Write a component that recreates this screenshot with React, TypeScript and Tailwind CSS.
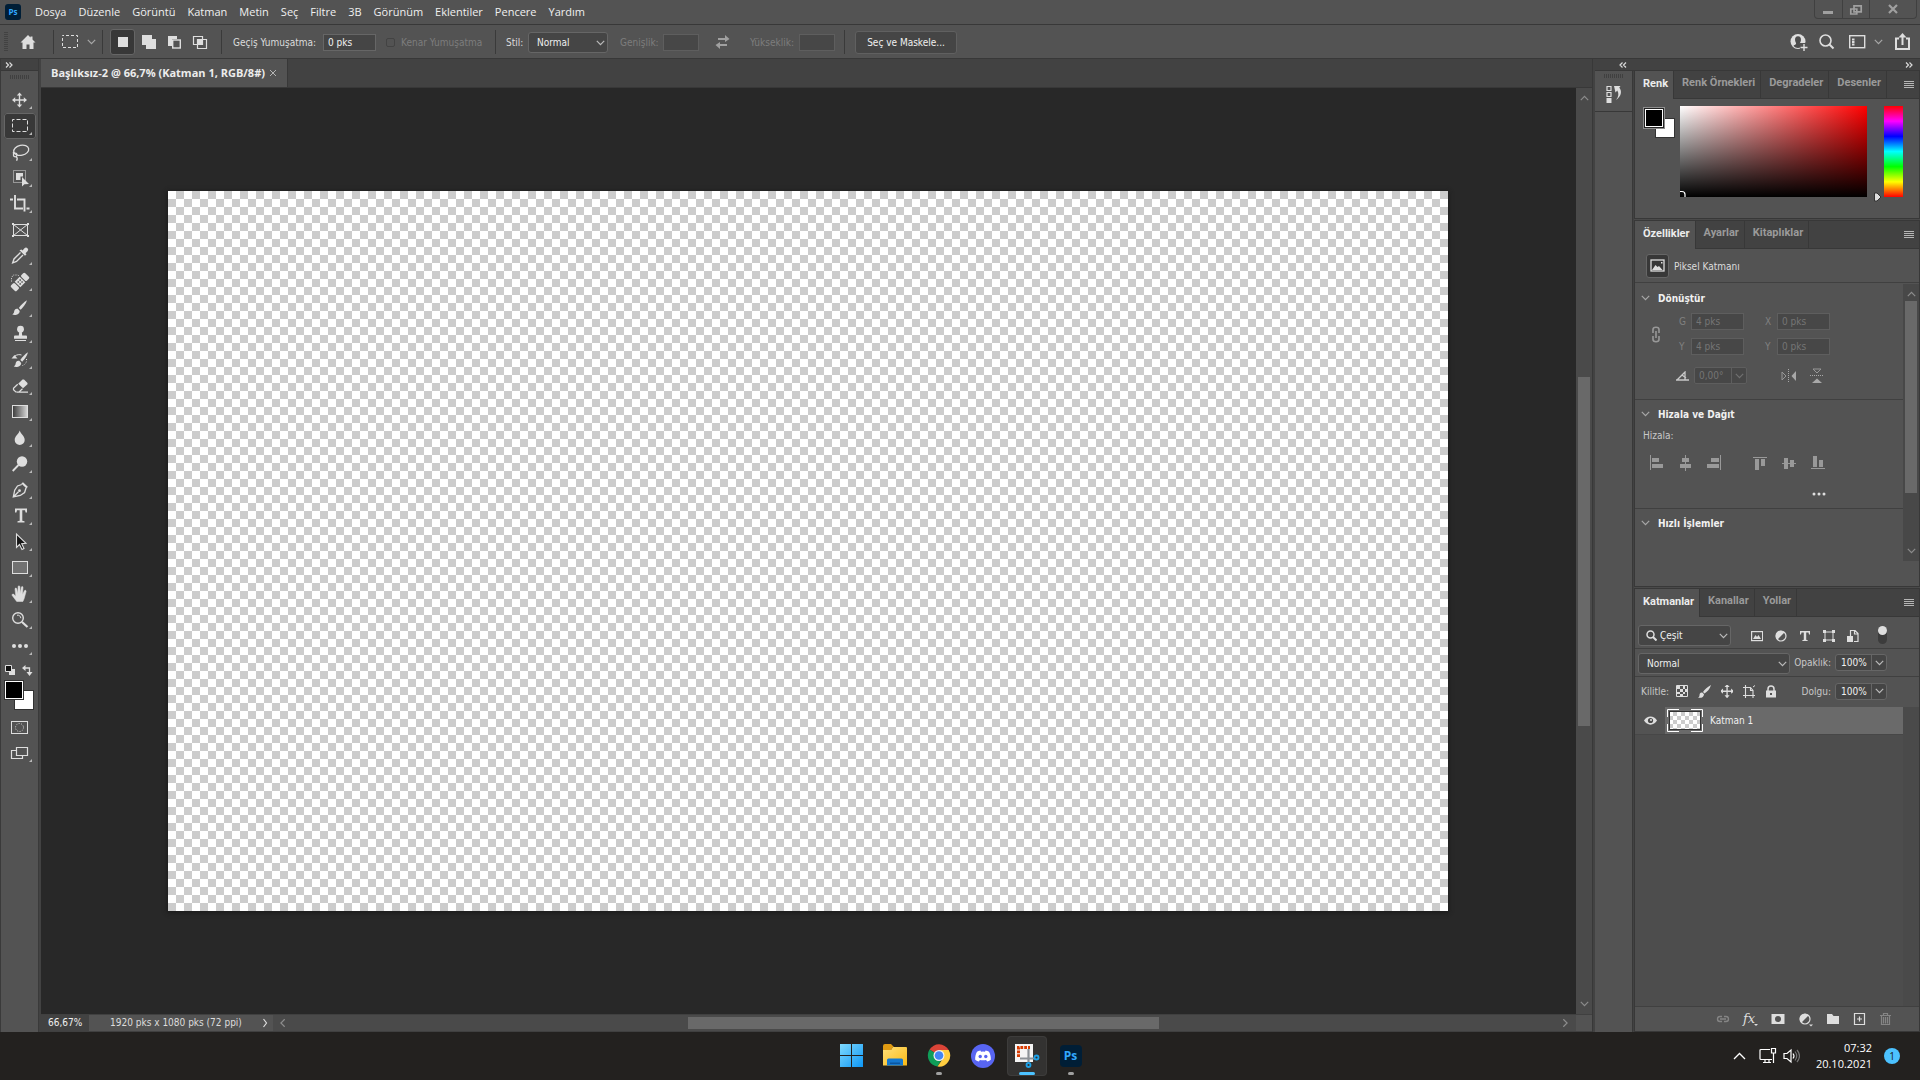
import React from "react";

const ui = "font-[family-name:'DejaVu_Sans_Condensed','DejaVu_Sans',sans-serif]";

function Chevron({ className = "" }: { className?: string }) {
  return (
    <svg className={className} width="9" height="6" viewBox="0 0 9 6" fill="none" stroke="currentColor" strokeWidth="1.2">
      <path d="M0.8 0.8 4.5 4.6 8.2 0.8" />
    </svg>
  );
}

function Svg({ w, h, children, className = "" }: { w: number; h: number; children: React.ReactNode; className?: string }) {
  return (
    <svg width={w} height={h} viewBox={`0 0 ${w} ${h}`} className={className} aria-hidden="true">
      {children}
    </svg>
  );
}

const C = "#dedede";

const movePath = "M15.5 5.5 12.800 8.600h2v3.600h-3.600v-2L8 13l3.200 2.800v-2h3.600v3.600h-2l2.700 3.100 2.700-3.100h-2v-3.600h3.600v2L23 13l-3.200-2.800v2h-3.600V8.600h2z";

const tools: { name: string; more: boolean; art: React.ReactNode }[] = [
  { name: "Taşı", more: true, art: <path d={movePath} fill={C} /> },
  { name: "Dikdörtgen Seçim", more: true, art: <rect x="8.5" y="6.5" width="15" height="12" fill="none" stroke={C} strokeDasharray="4 2" strokeDashoffset="2" /> },
  {
    name: "Kement",
    more: true,
    art: (
      <g fill="none" stroke={C} strokeWidth="1.3">
        <ellipse cx="17.2" cy="11.3" rx="7.6" ry="5" transform="rotate(-12 17.2 11.3)" />
        <circle cx="11.2" cy="16" r="1.8" />
        <path d="M12 17.5c1.6 1 1.4 2.6.6 4.2M9.6 15l-.2-2" />
      </g>
    ),
  },
  {
    name: "Nesne Seçimi",
    more: true,
    art: (
      <>
        <rect x="9.5" y="5.5" width="12" height="12" fill="none" stroke={C} strokeDasharray="1 1" />
        <path d="M12 8h7v3.500h-2.500V15H12z" fill={C} />
        <path d="M18 12v9.500l2.400-2.200 4.600-.3z" fill={C} />
      </>
    ),
  },
  { name: "Kırpma", more: true, art: <path d="M11 4v13.500h8M13 8.500h7.500v12M6 8.500h3M22.500 17.500h3" fill="none" stroke={C} strokeWidth="1.900" /> },
  {
    name: "Çerçeve",
    more: false,
    art: (
      <g fill="none" stroke={C}>
        <rect x="9.5" y="7.5" width="14" height="11" />
        <path d="M9.5 7.5l14 11M23.5 7.5l-14 11" />
        <path d="M8 7h2M23 7h2M8 19h2M23 19h2" strokeWidth="2" />
      </g>
    ),
  },
  {
    name: "Damlalık",
    more: true,
    art: (
      <>
        <path d="M17.5 6.5l1 1 2-2.200a2 2 0 0 1 3 3L21.500 10.300l1 1-1.500 1.500-5.500-5.500z" fill={C} />
        <path d="M16.500 9.500l-6.500 6.500-1.300 3.800 3.800-1.300L19 12" fill="none" stroke={C} strokeWidth="1.400" />
      </>
    ),
  },
  {
    name: "Nokta Düzeltme Fırçası",
    more: true,
    art: (
      <>
        <path d="M7.500 12.500V8.500l2-2.500h4l2 1" fill="none" stroke={C} strokeDasharray="1 1.300" />
        <g transform="rotate(-45 16 13)">
          <rect x="6" y="9" width="5.500" height="8" rx="1.500" fill={C} />
          <rect x="20.500" y="9" width="5.500" height="8" rx="1.500" fill={C} />
          <rect x="12.500" y="9" width="7" height="8" fill={C} />
          <path d="M14 11h1.500v1.500H14zM16.700 11h1.500v1.500h-1.500zM14 13.700h1.500v1.500H14zM16.700 13.700h1.500v1.500h-1.500z" fill="#535353" />
        </g>
      </>
    ),
  },
  {
    name: "Fırça",
    more: true,
    art: (
      <>
        <path d="M23 5.200c-3 1.500-6.200 5-8.200 7.700l1.900 1.800C19 12.500 22 9 23 5.200z" fill={C} />
        <path d="M13.800 13.800c-2.500-.5-3.600 1.200-3.700 3-.2 1.400-.8 2-1.900 2.600 2.200 1 7.300.8 7.500-3.500z" fill={C} />
      </>
    ),
  },
  {
    name: "Klonlama Damgası",
    more: true,
    art: (
      <>
        <circle cx="16.500" cy="8.200" r="3.400" fill={C} />
        <path d="M15.300 10h2.400l.5 4.500H22q1 0 1 1v2.200H10v-2.200q0-1 1-1h3.800zM11 19h11v1H11z" fill={C} />
      </>
    ),
  },
  {
    name: "Geçmiş Fırçası",
    more: true,
    art: (
      <>
        <path d="M24 5.200c-3 1.500-5.700 5-7.700 7.700l1.900 1.800C20.500 12.500 23 9 24 5.200z" fill={C} />
        <path d="M15.300 13.800c-2.500-.5-3.600 1.200-3.700 3-.2 1.400-.8 2-1.900 2.600 2.200 1 7.300.8 7.500-3.500z" fill={C} />
        <path d="M7.500 11.500l3-3.500 3 3.500z" fill={C} />
        <path d="M11 9c2-1.500 4.500-1.700 6.500-1" fill="none" stroke={C} />
        <path d="M22.500 12c.5 3-1 5.500-4 6.500" fill="none" stroke={C} strokeDasharray="1 1.500" />
      </>
    ),
  },
  {
    name: "Silgi",
    more: true,
    art: (
      <>
        <path d="M18.500 6.500h1.500l3.500 3.500v1.300l-4.500 4-4.800-4.600z" fill={C} />
        <path d="M13.700 11.200 9.500 15.300v1.400l2.300 2.300h3.200l3.500-3.200M13 19.200h11" fill="none" stroke={C} strokeWidth="1.200" />
      </>
    ),
  },
  {
    name: "Degrade",
    more: true,
    art: (
      <>
        <defs>
          <linearGradient id="toolGradient">
            <stop offset="0" stopColor="#3a3a3a" />
            <stop offset="1" stopColor="#d8d8d8" />
          </linearGradient>
        </defs>
        <rect x="8.5" y="6.5" width="15" height="12" fill="url(#toolGradient)" stroke={C} />
      </>
    ),
  },
  { name: "Bulanıklaştırma", more: true, art: <path d="M15.700 5.500c1.500 4 5 5.700 5 9.400a5 5 0 0 1-10 0c0-3.700 3.700-5.400 5-9.400z" fill={C} /> },
  {
    name: "Soldurma",
    more: true,
    art: (
      <>
        <circle cx="18" cy="10.500" r="5.200" fill={C} />
        <path d="M14.500 14 8.700 20" stroke={C} strokeWidth="1.800" />
      </>
    ),
  },
  {
    name: "Kalem",
    more: true,
    art: (
      <>
        <path d="M17.800 7.500 13.500 9 10.700 13.200 9.300 20l7-1.500 4.300-3 1.400-4.500M9.500 19.800l5-5" fill="none" stroke={C} strokeWidth="1.300" />
        <circle cx="15.500" cy="13.700" r="1.400" fill={C} />
        <path d="M19 5.200l4.800 4.600-1.300 1.800-5.200-5z" fill={C} />
      </>
    ),
  },
  { name: "Yatay Metin", more: true, art: <path d="M11 5.500h12V9.500h-1.400l-.6-2.200h-2.700v10.400l2.200.6v1.200h-7v-1.200l2.200-.6V7.300H13l-.6 2.200H11z" fill={C} /> },
  { name: "Yol Seçimi", more: true, art: <path d="M12.500 5v13.500l3-3 2.500 5 2-1-2.300-4.700 4.300-.5z" fill="#161616" stroke={C} strokeWidth="1.100" /> },
  { name: "Dikdörtgen", more: true, art: <rect x="8.5" y="6.5" width="15" height="12" fill="#717171" stroke={C} /> },
  {
    name: "El",
    more: true,
    art: (
      <path
        d="M12.700 20.500 8.200 14.500c-.7-1 .7-2 1.600-1.200l2 2-.8-7.200c-.1-1.300 1.500-1.500 1.800-.2l1 4.900.3-7c0-1.300 1.700-1.300 1.800 0l.3 6.800 1.100-6.300c.2-1.200 1.800-1 1.700.2l-.5 7 1.900-3.700c.6-1 2-.4 1.700.7l-2 7.200-1.200 2.800z"
        fill={C}
        stroke={C}
        strokeWidth=".5"
      />
    ),
  },
  {
    name: "Yakınlaştırma",
    more: true,
    art: (
      <>
        <circle cx="14" cy="11" r="5.300" fill="none" stroke={C} strokeWidth="1.400" />
        <path d="M13 8.200c2-.4 3.800 1 3.800 3" fill="none" stroke={C} />
        <path d="M18 15l5.500 5" stroke={C} strokeWidth="2.200" />
      </>
    ),
  },
  {
    name: "Araç çubuğunu düzenle",
    more: true,
    art: (
      <g fill={C}>
        <circle cx="10" cy="13" r="2" />
        <circle cx="16" cy="13" r="2" />
        <circle cx="22" cy="13" r="2" />
      </g>
    ),
  },
];

const menus = ["Dosya", "Düzenle", "Görüntü", "Katman", "Metin", "Seç", "Filtre", "3B", "Görünüm", "Eklentiler", "Pencere", "Yardım"];

function Sep() {
  return <div className="h-6 w-px shrink-0 bg-[#3a3a3a]" />;
}

function TitleBar() {
  return (
    <header className="flex h-[25px] shrink-0 items-start border-b border-[#383838] bg-[#535353]">
      <div className="ml-[5px] mt-1 flex h-4 w-4 items-center justify-center rounded-[3px] bg-[#001e36] font-['Open_Sans',sans-serif] text-[8px] font-bold text-[#31a8ff]">Ps</div>
      <nav className="ml-2 flex h-6 items-center font-['Open_Sans',sans-serif] text-[11px] text-[#f0f0f0]">
        {menus.map((m) => (
          <button key={m} className="px-[6px]">
            {m}
          </button>
        ))}
      </nav>
      <div className="ml-auto mr-[3px] flex h-[19px] rounded-b border border-t-0 border-[#404040] text-[#a0a0a0]">
        <button aria-label="Küçült" className="w-[28px] border-r border-[#404040]">
          <Svg w={26} h={18}><path d="M8 11h10v3H8z" fill="#a0a0a0" /></Svg>
        </button>
        <button aria-label="Geri yükle" className="w-[27px] border-r border-[#404040]">
          <Svg w={26} h={18}><path d="M11 5.800h7.200v6H11zM7.800 9h6v5h-6z" fill="#535353" stroke="#a0a0a0" strokeWidth="1.700" /></Svg>
        </button>
        <button aria-label="Kapat" className="flex w-[46px] justify-center">
          <Svg w={26} h={18}><path d="M9 5l8 8M17 5l-8 8" stroke="#a0a0a0" strokeWidth="2.200" /></Svg>
        </button>
      </div>
    </header>
  );
}

function OptionsBar() {
  return (
    <div className={`flex h-[34px] shrink-0 items-center border-b border-[#383838] bg-[#535353] pt-px text-[10px] text-[#dcdcdc] ${ui}`}>
      <div className="ml-1 h-5 w-1 bg-[repeating-linear-gradient(#424242_0_1px,transparent_1px_2px)]" />
      <button aria-label="Giriş" className="ml-3">
        <Svg w={16} h={16}><path d="M8 1 0.500 8.500h2V15h4v-4.500h3V15h4V8.500h2L12.500 5.500V2.500h-2v1z" fill={C} /></Svg>
      </button>
      <div className="ml-[17px]"><Sep /></div>
      <button aria-label="Araç ön ayarı" className="ml-2 flex items-center gap-2 text-[#a8a8a8]">
        <Svg w={17} h={14}><rect x="0.500" y="0.500" width="15" height="12" fill="none" stroke={C} strokeDasharray="3 2" strokeDashoffset="1.500" /></Svg>
        <Chevron />
      </button>
      <div className="ml-[6px]"><Sep /></div>
      <button aria-label="Yeni seçim" className="ml-[7px] flex h-[26px] w-[25px] items-center justify-center rounded-[3px] border border-[#666] bg-[#383838]">
        <span className="h-[10px] w-[10px] bg-[#dedede]" />
      </button>
      <button aria-label="Seçime ekle" className="ml-[6px]">
        <Svg w={16} h={16}><path d="M1 1h10v4h4v10H5v-4H1z" fill={C} /></Svg>
      </button>
      <button aria-label="Seçimden çıkar" className="ml-[11px]">
        <Svg w={14} h={16}><path d="M0 2h9v3H4v7H0z" fill={C} /><rect x="4.700" y="6" width="7.600" height="8" fill="none" stroke={C} strokeWidth="1.400" /></Svg>
      </button>
      <button aria-label="Seçimle kesiştir" className="ml-[10px]">
        <Svg w={16} h={16}><path d="M1.500 2.500h9v8h-9zM5.500 5.500h9v9h-9z" fill="none" stroke={C} strokeWidth="1.200" /><path d="M6 6h4.500v4.500H6z" fill={C} /></Svg>
      </button>
      <div className="ml-[13px]"><Sep /></div>
      <label htmlFor="feather" className="ml-[11px] w-[83px] whitespace-nowrap">Geçiş Yumuşatma:</label>
      <input id="feather" defaultValue="0 pks" className="ml-[7px] h-[17px] w-[53px] border border-[#666] bg-[#454545] px-1 text-[#f0f0f0]" />
      <input id="antialias" type="checkbox" disabled className="ml-[10px] h-[9px] w-[9px] appearance-none rounded-[2px] border border-[#434343]" />
      <label htmlFor="antialias" className="ml-[6px] w-[82px] whitespace-nowrap text-[#7d7d7d]">Kenar Yumuşatma</label>
      <div className="ml-[12px]"><Sep /></div>
      <label htmlFor="style" className="ml-[10px] w-[16px] whitespace-nowrap">Stil:</label>
      <div className="relative ml-[6px]">
        <select id="style" className="block h-[21px] w-[80px] appearance-none rounded-[3px] border border-[#666] bg-[#454545] pl-2 text-[#f0f0f0]">
          <option>Normal</option>
        </select>
        <Chevron className="pointer-events-none absolute right-[3px] top-2 text-[#bbb]" />
      </div>
      <label htmlFor="width" className="ml-3 w-[38px] whitespace-nowrap text-[#7d7d7d]">Genişlik:</label>
      <input id="width" disabled className="ml-[5px] h-[17px] w-9 border border-[#5e5e5e] bg-[#474747]" />
      <button aria-label="Değiştir" className="ml-4">
        <Svg w={15} h={14}><path d="M3 3h7V0l4.500 4L10 7V5H3zM12 9v2H5v3L0.500 10 5 7v2z" fill="#a0a0a0" /></Svg>
      </button>
      <label htmlFor="height" className="ml-5 w-[44px] whitespace-nowrap text-[#7d7d7d]">Yükseklik:</label>
      <input id="height" disabled className="ml-[5px] h-[17px] w-9 border border-[#5e5e5e] bg-[#474747]" />
      <div className="ml-[9px]"><Sep /></div>
      <button className="ml-[10px] h-[23px] w-[102px] rounded-[3px] border border-[#606060] bg-[#454545] text-[#f0f0f0]">Seç ve Maskele...</button>
      <div className="ml-auto mr-2 flex items-center text-[#a8a8a8]">
        <button aria-label="Hesap">
          <Svg w={18} h={18}>
            <circle cx="8" cy="8.500" r="7.500" fill={C} />
            <path d="M8 3.200c-2.300 0-3.300 1.800-2.900 4.200.2 1.500 1 2.400 1 3.300C5.500 12 4 11.800 3.500 13a6.200 6.200 0 0 0 9 0c-.5-1.200-2-1-2.600-2.300 0-.9.800-1.800 1-3.300.4-2.400-.6-4.200-2.900-4.200z" fill="#4c4c4c" />
            <path d="M10 10h8v8h-8z" fill="#535353" />
            <path d="M14 11v7M10.500 14.500h7" stroke={C} strokeWidth="1.400" />
          </Svg>
        </button>
        <button aria-label="Ara" className="ml-[11px]">
          <Svg w={16} h={16}><circle cx="6.500" cy="6.500" r="5.500" fill="none" stroke={C} strokeWidth="1.600" /><path d="M10.500 10.500l4 4" stroke={C} strokeWidth="2" /></Svg>
        </button>
        <button aria-label="Çalışma alanı" className="ml-[14px] flex items-center gap-2">
          <Svg w={17} h={14}><rect x="0.700" y="0.700" width="15" height="12" fill="none" stroke={C} strokeWidth="1.400" /><path d="M3 3.500h2.500v2H3zM3 6h2.500v2H3zM3 8.500h2.500v2H3z" fill={C} /></Svg>
          <Chevron />
        </button>
        <button aria-label="Paylaş" className="ml-[11px]">
          <Svg w={18} h={18}><path d="M5 5.500H2v10.500h13V5.500h-3M8.500 12V3" fill="none" stroke={C} strokeWidth="2" /><path d="M4.500 4.500 8.500 0l4 4.500z" fill={C} /></Svg>
        </button>
      </div>
    </div>
  );
}

function DoubleArrow({ left = false }: { left?: boolean }) {
  return (
    <Svg w={8} h={6}>
      <path d={left ? "M3.500.500 1 3l2.500 2.500M7 .500 4.500 3 7 5.500" : "M1 .500 3.500 3 1 5.500M4.500.500 7 3 4.500 5.500"} fill="none" stroke="#dadada" strokeWidth="1.200" />
    </Svg>
  );
}

const grip = "bg-[repeating-linear-gradient(90deg,#404040_0_1px,transparent_1px_2px)]";

function Toolbar() {
  return (
    <aside className="flex w-[39px] shrink-0 flex-col border-x border-[#3a3a3a] bg-[#535353]">
      <div className="flex h-3 items-center border-b border-[#383838] bg-[#424242] pl-1">
        <button aria-label="Genişlet"><DoubleArrow /></button>
      </div>
      <div className={`mx-auto mt-1 h-1 w-5 ${grip}`} />
      <div className="ml-[3px] mt-2 flex flex-col">
        {tools.map((t, i) => (
          <button key={t.name} aria-label={t.name} className={`h-[26px] w-8 rounded-[3px] ${i === 1 ? "bg-[#383838] outline outline-1 -outline-offset-1 outline-[#666]" : ""}`}>
            <Svg w={32} h={26}>
              {t.art}
              {t.more && <path d="M28 19v3h-3z" fill="#b8b8b8" />}
            </Svg>
          </button>
        ))}
      </div>
      <div className="ml-1 mt-[6px] flex justify-between pr-[5px]">
        <button aria-label="Varsayılan renkler">
          <Svg w={11} h={11}><path d="M4 4h6v6H4z" fill={C} /><path d="M.500.500h6v6h-6z" fill="#111" stroke={C} /></Svg>
        </button>
        <button aria-label="Renkleri değiştir">
          <Svg w={11} h={11}><path d="M3 3h4.500v4" fill="none" stroke={C} strokeWidth="1.300" /><path d="M0 3l3.500-3v6zM7.500 11l-3-4h6z" fill={C} /></Svg>
        </button>
      </div>
      <div className="ml-[3px] mt-1 grid h-[30px] w-[30px] grid-cols-1 grid-rows-1">
        <button aria-label="Arka plan rengi" className="col-start-1 row-start-1 h-5 w-5 self-end justify-self-end border border-[#333] bg-white" />
        <button aria-label="Ön plan rengi" className="z-10 col-start-1 row-start-1 h-5 w-5 border border-[#333] bg-white p-px"><span className="block h-full bg-black" /></button>
      </div>
      <button aria-label="Hızlı maske" className="ml-[3px] mt-1 h-[26px] w-8">
        <Svg w={32} h={26}><rect x="7.500" y="7.500" width="16" height="12" fill="none" stroke={C} /><circle cx="15.500" cy="13.500" r="4" fill="none" stroke={C} strokeDasharray="1 1.500" /></Svg>
      </button>
      <button aria-label="Ekran modu" className="ml-[3px] h-[26px] w-8">
        <Svg w={32} h={26}><path d="M7.500 10.500h11v8h-11z" fill="none" stroke={C} strokeWidth="1.200" /><path d="M12.500 7.500h11v8h-11z" fill="#535353" stroke={C} strokeWidth="1.200" /><path d="M28 19v3h-3z" fill="#b8b8b8" /></Svg>
      </button>
    </aside>
  );
}

function DocumentArea() {
  return (
    <main className="ml-[2px] flex min-w-0 grow flex-col border-r border-[#383838] bg-[#424242]">
      <div className="flex h-[29px] shrink-0 border-b border-[#383838]">
        <div className="flex items-center border-r border-[#383838] bg-[#535353] pl-[10px] pr-[10px] font-['Open_Sans',sans-serif] text-[11px] font-bold text-[#ececec]">
          <span className="whitespace-nowrap">Başlıksız-2 @ 66,7% (Katman 1, RGB/8#)</span>
          <button aria-label="Belgeyi kapat" className="ml-1">
            <Svg w={8} h={8}><path d="M1 1l6 6M7 1 1 7" stroke="#b5b5b5" /></Svg>
          </button>
        </div>
      </div>
      <div className="flex min-h-0 grow">
        <div className="flex min-w-0 grow items-center justify-center overflow-hidden bg-[#282828] pr-px">
          <div className="aspect-video w-[1280px] shrink-0 bg-[conic-gradient(#ccc_25%,#fff_0_50%,#ccc_0_75%,#fff_0)] bg-[length:16px_16px] shadow-[0_1px_4px_1px_#1c1c1c]" />
        </div>
        <div className="flex w-4 shrink-0 flex-col items-center bg-[#4a4a4a] text-[#8c8c8c]">
          <Chevron className="mt-[7px] rotate-180" />
          <div className="mt-[276px] h-[349px] w-3 bg-[#696969]" />
          <Chevron className="mb-[7px] mt-auto" />
        </div>
      </div>
      <div className={`flex h-[18px] shrink-0 items-stretch border-b border-t border-[#404040] text-[10px] leading-4 text-[#dcdcdc] ${ui}`}>
        <input aria-label="Yakınlaştırma" defaultValue="66,67%" className="w-12 bg-[#424242] pl-[7px] text-[#f0f0f0]" />
        <div className="flex w-[184px] items-center justify-between bg-[#535353] pl-[21px] pr-1">
          <span className="whitespace-nowrap">1920 pks x 1080 pks (72 ppi)</span>
          <button aria-label="Durum bilgisi"><Svg w={7} h={10}><path d="M1.500 1l3 4-3 4" fill="none" stroke={C} strokeWidth="1.200" /></Svg></button>
        </div>
        <div className="flex grow items-center bg-[#4a4a4a] text-[#8c8c8c]">
          <Chevron className="ml-[5px] rotate-90" />
          <div className="ml-[401px] h-3 w-[471px] bg-[#696969]" />
          <Chevron className="ml-auto mr-[6px] -rotate-90" />
        </div>
        <div className="w-4 bg-[#535353]" />
      </div>
    </main>
  );
}

function Tabs({ names }: { names: string[] }) {
  return (
    <div className="flex h-7 shrink-0 bg-[#424242] font-['Roboto',sans-serif] text-[11px] font-bold">
      {names.map((n, i) => (
        <button key={n} className={`whitespace-nowrap border-r border-[#383838] pb-[2px] pl-2 pr-[5px] ${i === 0 ? "bg-[#535353] text-[#ececec]" : "border-b text-[#9a9a9a]"}`}>
          {n}
        </button>
      ))}
      <div className="flex grow items-center justify-end border-b border-[#383838] pr-[5px]">
        <button aria-label="Panel menüsü">
          <Svg w={10} h={8}><path d="M0 .500h10M0 2.500h10M0 4.500h10M0 6.500h10" stroke="#b5b5b5" /></Svg>
        </button>
      </div>
    </div>
  );
}

function ColorPanel() {
  return (
    <section className="h-[148px] shrink-0 border border-t-0 border-[#383838] bg-[#535353]">
      <Tabs names={["Renk", "Renk Örnekleri", "Degradeler", "Desenler"]} />
      <div className="flex px-2 pt-[7px]">
        <div className="grid h-8 w-8 shrink-0 grid-cols-1 grid-rows-1">
          <button aria-label="Arka plan" className="col-start-1 row-start-1 h-5 w-5 self-end justify-self-end border border-[#333] bg-white" />
          <button aria-label="Ön plan" className="z-10 col-start-1 row-start-1 mt-[1px] h-[22px] w-[22px] border border-[#8d8d8d] bg-[#222] p-px"><span className="block h-full border border-white bg-black" /></button>
        </div>
        <div className="ml-[5px] h-[91px] grow bg-[linear-gradient(to_top,#000,transparent),linear-gradient(to_right,#fff,#f00)]">
          <div className="flex h-full items-end"><Svg w={7} h={7}><path d="M0 1.500h2c2 0 3 1.500 3 3V7" fill="none" stroke="#fff" strokeWidth="1.200" /></Svg></div>
        </div>
        <div className="mb-[-5px] ml-[6px] flex items-end">
          <Svg w={10} h={10}><path d="M1.500 1h2.500l4 4-4 4H1.500z" fill={C} stroke="#333" /></Svg>
        </div>
        <div className="ml-px mr-2 h-[91px] w-[19px] bg-[linear-gradient(#f00,#f0f,#00f,#0ff,#0f0,#ff0,#f00)]" />
      </div>
    </section>
  );
}

function Field({ id, label, value }: { id: string; label: string; value: string }) {
  return (
    <div className="flex items-center">
      <label htmlFor={id} className="w-3 text-[#808080]">{label}</label>
      <input id={id} disabled defaultValue={value} className="h-[17px] w-[53px] border border-[#5e5e5e] bg-[#474747] px-1 text-[#757575]" />
    </div>
  );
}

function Heading({ children }: { children: string }) {
  return (
    <button className="ml-[6px] flex h-4 items-center gap-2 font-bold text-[#f0f0f0]">
      <Chevron className="text-[#a8a8a8]" />
      {children}
    </button>
  );
}

const alignIcons = [
  { n: "Sola", d: "M0 0h1v15H0zM2 3h7v4H2zM2 9h11v4H2z" },
  { n: "Yatay ortala", d: "M6 0h1v16H6zM3 3h7v4H3zM1 9h11v4H1z" },
  { n: "Sağa", d: "M13 0h1v15h-1zM4 3h8v4H4zM0 9h12v4H0z" },
  { n: "Üste", d: "M0 2h14v1H0zM2 4h4v11H2zM8 4h4v7H8z" },
  { n: "Dikey ortala", d: "M0 8h14v1H0zM2 3h4v11H2zM8 5h4v7H8z" },
  { n: "Alta", d: "M0 13h14v1H0zM2 1h4v11H2zM8 5h4v7H8z" },
];

function PropertiesPanel() {
  return (
    <section className={`mt-px flex h-[367px] shrink-0 flex-col border border-[#383838] bg-[#535353] text-[10px] ${ui}`}>
      <Tabs names={["Özellikler", "Ayarlar", "Kitaplıklar"]} />
      <div className="flex h-[34px] shrink-0 items-center border-b border-[#404040] pl-[11px] text-[#dcdcdc]">
        <div className="flex h-6 w-[23px] items-center justify-center rounded-[3px] border border-[#666] bg-[#383838]">
          <Svg w={15} h={13}><rect x="1" y="1" width="13" height="11" fill="none" stroke={C} strokeWidth="1.300" /><path d="M2 11l3.500-5 2 2 1.500-1 3.500 4zM11 3h1.500v1.500H11z" fill={C} /></Svg>
        </div>
        <span className="ml-[5px] mt-[2px]">Piksel Katmanı</span>
      </div>
      <div className="mt-px flex">
        <div className="min-w-0 grow">
          <div className="h-[116px] border-b border-[#404040] pt-[6px]">
            <Heading>Dönüştür</Heading>
            <div className="ml-[16px] mt-[7px] flex">
              <div className="flex w-[28px] items-center">
                <Svg w={10} h={17}><path d="M2 7V3.500C2 .500 8 .500 8 3.500V7M2 10v3.500c0 3 6 3 6 0V10M5 5v7" fill="none" stroke="#989898" strokeWidth="1.600" /></Svg>
              </div>
              <div className="grid grid-cols-[65px_65px] gap-x-[21px] gap-y-2">
                <Field id="pw" label="G" value="4 pks" />
                <Field id="px" label="X" value="0 pks" />
                <Field id="ph" label="Y" value="4 pks" />
                <Field id="py" label="Y" value="0 pks" />
              </div>
            </div>
            <div className="ml-[41px] mt-3 flex items-center">
              <Svg w={13} h={10}><path d="M0 9h13M1 9 9 1v8M6 4l4 3" fill="none" stroke="#c8c8c8" strokeWidth="1.300" /></Svg>
              <div className="ml-[5px] flex h-[17px] rounded-[2px] border border-[#5e5e5e] bg-[#474747]">
                <input aria-label="Açı" disabled defaultValue="0,00°" className="w-[37px] border-r border-[#5e5e5e] pl-1 text-[#757575]" />
                <button aria-label="Açı seçenekleri" className="flex w-[14px] items-center justify-center text-[#707070]"><Chevron /></button>
              </div>
              <button aria-label="Yatay çevir" className="ml-[34px]"><Svg w={16} h={14}><path d="M1 3l4 4-4 4z" fill="none" stroke="#989898" /><path d="M15 2v10L10.500 7z" fill="#a8a8a8" /><path d="M7.500 0v14" stroke="#a8a8a8" strokeDasharray="1 1" /></Svg></button>
              <button aria-label="Dikey çevir" className="ml-[13px]"><Svg w={14} h={16}><path d="M3 1h8L7 5z" fill="none" stroke="#989898" /><path d="M2 15h10L7 10.500z" fill="#a8a8a8" /><path d="M0 7.500h14" stroke="#a8a8a8" strokeDasharray="1 1" /></Svg></button>
            </div>
          </div>
          <div className="h-[109px] border-b border-[#404040] pt-[6px]">
            <Heading>Hizala ve Dağıt</Heading>
            <div className="ml-2 mt-[6px] h-[15px] text-[#c8c8c8]">Hizala:</div>
            <div className="ml-[15px] mt-[12px] grid w-[190px] grid-cols-[29px_28px_46px_29px_29px_29px]">
              {alignIcons.map((a) => (
                <button key={a.n} aria-label={a.n}><Svg w={14} h={16}><path d={a.d} fill="#999" /></Svg></button>
              ))}
            </div>
            <button aria-label="Diğer seçenekler" className="ml-[177px] mt-[21px] block">
              <Svg w={14} h={4}><circle cx="2" cy="2" r="1.500" fill={C} /><circle cx="7" cy="2" r="1.500" fill={C} /><circle cx="12" cy="2" r="1.500" fill={C} /></Svg>
            </button>
          </div>
          <div className="pt-[6px]"><Heading>Hızlı İşlemler</Heading></div>
        </div>
        <div className="flex h-[277px] w-4 shrink-0 flex-col items-center bg-[#484848] text-[#8c8c8c]">
          <Chevron className="mt-[7px] rotate-180" />
          <div className="mt-1 h-[192px] w-3 bg-[#696969]" />
          <Chevron className="mb-[7px] mt-auto" />
        </div>
      </div>
    </section>
  );
}

function PercentField({ id, label }: { id: string; label: string }) {
  return (
    <div className="ml-auto flex items-center">
      <label htmlFor={id} className="mr-1 text-[#c8c8c8]">{label}</label>
      <div className="flex h-[17px] rounded-[3px] border border-[#666] bg-[#454545]">
        <input id={id} defaultValue="100%" className="w-9 border-r border-[#666] pl-[5px] text-[#f0f0f0]" />
        <button aria-label={`${label} kaydırıcısı`} className="flex w-[14px] items-center justify-center text-[#bbb]"><Chevron /></button>
      </div>
    </div>
  );
}

function Half() {
  return (
    <>
      <circle cx="6" cy="6" r="5" fill="none" stroke={C} strokeWidth="1.200" />
      <path d="M9.700 2.300A5.200 5.200 0 0 0 2.300 9.700z" fill={C} />
    </>
  );
}

function LayersPanel() {
  return (
    <section className={`mt-px flex min-h-0 grow flex-col border border-[#383838] bg-[#535353] text-[10px] ${ui}`}>
      <Tabs names={["Katmanlar", "Kanallar", "Yollar"]} />
      <div className="flex h-8 shrink-0 items-center border-b border-[#404040] pl-[3px] pt-[6px]">
        <div className="relative">
          <select aria-label="Katman filtresi" className="block h-[21px] w-[93px] appearance-none rounded-[3px] border border-[#666] bg-[#454545] pl-[21px] text-[#f0f0f0]">
            <option>Çeşit</option>
          </select>
          <Svg w={11} h={11} className="pointer-events-none absolute left-2 top-[5px]"><circle cx="4.500" cy="4.500" r="3.500" fill="none" stroke={C} strokeWidth="1.500" /><path d="M7 7l3.500 3.500" stroke={C} strokeWidth="2" /></Svg>
          <Chevron className="pointer-events-none absolute right-[3px] top-2 text-[#bbb]" />
        </div>
        <div className="ml-5 flex items-center gap-3">
          <button aria-label="Piksel katmanları"><Svg w={12} h={12}><rect x=".600" y="1.600" width="11" height="9" fill="none" stroke={C} strokeWidth="1.200" /><path d="M2 9l2.500-4L6 7l1.500-2L10 9z" fill={C} /></Svg></button>
          <button aria-label="Ayarlama katmanları"><Svg w={12} h={12}><Half /></Svg></button>
          <button aria-label="Metin katmanları"><Svg w={12} h={12}><path d="M1 1h10v3.500h-1L9.500 2.500H7.200v7.300l1.500.4V11H3.300v-.8l1.500-.4V2.500H2.500L2 4.500H1z" fill={C} /></Svg></button>
          <button aria-label="Şekil katmanları"><Svg w={12} h={12}><rect x="2" y="2" width="8" height="8" fill="none" stroke={C} /><path d="M0 0h3v3H0zM9 0h3v3H9zM0 9h3v3H0zM9 9h3v3H9z" fill={C} /></Svg></button>
          <button aria-label="Akıllı nesneler"><Svg w={12} h={12}><path d="M3.500 6V.500H8L11 3.500v8H7M7.500.500V4H11" fill="none" stroke={C} strokeWidth="1.200" /><path d="M0 6h6v6H0z" fill={C} /></Svg></button>
        </div>
        <button aria-label="Filtreyi aç/kapat" className="mb-[2px] ml-[19px] flex h-[18px] w-[9px] rounded-full bg-[#3c3c3c]"><span className="h-[9px] w-[9px] rounded-full bg-[#dedede]" /></button>
      </div>
      <div className="flex h-7 shrink-0 items-center border-b border-[#404040] pl-[3px] pr-[32px]">
        <div className="relative mt-px">
          <select aria-label="Karıştırma modu" className="block h-[21px] w-[152px] appearance-none rounded-[3px] border border-[#666] bg-[#454545] pl-2 text-[#f0f0f0]">
            <option>Normal</option>
          </select>
          <Chevron className="pointer-events-none absolute right-[3px] top-2 text-[#bbb]" />
        </div>
        <PercentField id="opacity" label="Opaklık:" />
      </div>
      <div className="flex h-[30px] shrink-0 items-center pb-[2px] pl-[6px] pr-[32px]">
        <span className="w-[25px] whitespace-nowrap text-[#c8c8c8]">Kilitle:</span>
        <div className="ml-[10px] flex items-center gap-[10px]">
          <button aria-label="Saydam pikselleri kilitle"><Svg w={12} h={12}><path d="M.500.500h11v11H.500z" fill="none" stroke={C} /><path d="M1 1h3v3H1zM7 1h2v3H7zM4 4h3v3H4zM9 4h2v3H9zM1 7h3v2H1zM7 7h2v2H7zM4 9h3v2H4z" fill={C} /></Svg></button>
          <button aria-label="Görüntü piksellerini kilitle"><Svg w={13} h={13}><path d="M13 0C9 2 6.500 5 5 7l1.500 1.500C9 7 12 4 13 0zM4.300 7.500C2 7.200 1.500 9 1.500 10.500 1.300 12 .500 12.200 0 12.500c2.500 1 6 0 6-3.300z" fill={C} /></Svg></button>
          <button aria-label="Konumu kilitle"><Svg w={12} h={13}><path transform="translate(-8.500 -6) scale(.94)" d={movePath} fill={C} /></Svg></button>
          <button aria-label="Çalışma yüzeyi kilidi"><Svg w={12} h={13}><path d="M2.500 0v13M0 2.500h7.500l2.500 3V13M0 10.500h12M7.500 2.500v3H10" fill="none" stroke={C} strokeWidth="1.100" /><path d="M10 2l2-1.500" stroke={C} /></Svg></button>
          <button aria-label="Tümünü kilitle"><Svg w={12} h={13}><path d="M3 6V4a3 3 0 0 1 6 0v2" fill="none" stroke={C} strokeWidth="1.500" /><path d="M1 5.500h10v7H1z" fill={C} /><path d="M5 8h2v2H5z" fill="#535353" /></Svg></button>
        </div>
        <PercentField id="fill" label="Dolgu:" />
      </div>
      <div className="flex min-h-0 grow">
        <div className="grow bg-[#4d4d4d]">
          <div className="flex h-7 items-stretch border-b border-[#474747] bg-[#535353]">
            <button aria-label="Görünürlük" className="flex w-[30px] items-center justify-center">
              <Svg w={13} h={9}><path d="M0 4.500C3-1 10-1 13 4.500 10 10 3 10 0 4.500z" fill={C} /><circle cx="6.500" cy="4.500" r="2.600" fill="#4a4a4a" /><circle cx="7" cy="4" r="1" fill={C} /></Svg>
            </button>
            <div className="flex grow items-center bg-[#6a6a6a] pl-[2px] text-[#f0f0f0]">
              <Svg w={36} h={23}>
                <defs>
                  <pattern id="checks" width="8" height="8" patternUnits="userSpaceOnUse" x="2" y="3">
                    <path d="M0 0h8v8H0z" fill="#fff" /><path d="M4 0h4v4H4zM0 4h4v4H0z" fill="#ccc" />
                  </pattern>
                </defs>
                <rect x="2.500" y="2.500" width="31" height="18" fill="url(#checks)" stroke="#333" />
                <path d="M.500 8V.500H12M24 .500h11.500V8M35.500 15v7.500H24M12 22.500H.500V15" fill="none" stroke="#fff" />
              </Svg>
              <span className="ml-[7px]">Katman 1</span>
            </div>
          </div>
        </div>
        <div className="w-4 bg-[#4a4a4a]" />
      </div>
      <div className="flex h-[25px] shrink-0 items-center justify-end gap-[13px] border-t border-[#404040] pr-[27px]">
        <button aria-label="Katmanları bağla"><Svg w={14} h={14}><path d="M6 4.500H4a2.500 2.500 0 0 0 0 5h2M8 4.500h2a2.500 2.500 0 0 1 0 5H8M4 7h6" fill="none" stroke="#858585" strokeWidth="1.400" /></Svg></button>
        <button aria-label="Katman stili" className="flex items-end font-['DejaVu_Serif',serif] text-[13px] italic leading-4 text-[#dedede]"><span className="w-[11px]">fx</span><Svg w={4} h={4}><path d="M0 1h4L2 3z" fill={C} /></Svg></button>
        <button aria-label="Maske ekle"><Svg w={14} h={14}><path d="M.500 2h13v10H.500z" fill={C} /><circle cx="7" cy="7" r="3" fill="#535353" /></Svg></button>
        <button aria-label="Ayarlama katmanı"><Svg w={15} h={15}><g transform="translate(1 1)"><Half /></g><path d="M11 12.500h4l-2 2z" fill={C} /></Svg></button>
        <button aria-label="Grup"><Svg w={14} h={14}><path d="M1 2h5l1.500 2H13v8H1z" fill={C} /></Svg></button>
        <button aria-label="Yeni katman"><Svg w={13} h={14}><path d="M1.500 1.500h10v11h-10z" fill="none" stroke={C} strokeWidth="1.200" /><path d="M6.500 4.500v5M4 7h5" stroke={C} strokeWidth="1.200" /></Svg></button>
        <button aria-label="Sil"><Svg w={13} h={14}><path d="M1 3.500h11M4.500 3V1.500h4V3M2.500 4v8.500h8V4M4.500 5v6.500M6.500 5v6.500M8.500 5v6.500" fill="none" stroke="#858585" strokeWidth="1.200" /></Svg></button>
      </div>
    </section>
  );
}

function Dock() {
  return (
    <aside className="ml-[2px] flex w-[325px] shrink-0 flex-col bg-[#424242]">
      <div className="flex h-3 shrink-0 items-center justify-between border-b border-[#383838] pl-[24px] pr-[7px]">
        <button aria-label="Simgeleri genişlet"><DoubleArrow left /></button>
        <button aria-label="Panelleri daralt"><DoubleArrow /></button>
      </div>
      <div className="flex min-h-0 grow">
        <div className="w-[38px] shrink-0 border-r border-[#383838] bg-[#535353]">
          <div className="flex h-[41px] flex-col items-center border-b border-[#383838]">
            <div className={`mt-[3px] h-1 w-5 ${grip}`} />
            <button aria-label="Geçmiş" className="mt-[6px]">
              <Svg w={16} h={19}>
                <path d="M1 2.500h4v4H1zM1 8.500h4v4H1z" fill="none" stroke={C} strokeWidth="1.200" />
                <path d="M.500 14h5v5h-5z" fill={C} />
                <path d="M8 2h6.500L13.300 3.500c2.700 3.500 2.500 8.500-3.300 12.500 2.800-3.500 3-6.500 1.300-9.500L9.500 8.500z" fill={C} />
              </Svg>
            </button>
          </div>
        </div>
        <div className="ml-px flex min-w-0 grow flex-col bg-[#4a4a4a]">
          <ColorPanel />
          <PropertiesPanel />
          <LayersPanel />
        </div>
      </div>
    </aside>
  );
}

function Taskbar() {
  const tile = "flex h-10 w-10 flex-col items-center rounded pt-2";
  return (
    <footer className="grid h-12 shrink-0 grid-cols-[1fr_auto_1fr] items-center bg-[#23211f] font-['Open_Sans',sans-serif] text-white">
      <div />
      <div className="flex gap-1 pl-px">
        <button aria-label="Başlat" className={tile}>
          <Svg w={24} h={24}>
            <defs><linearGradient id="win" x1="0" y1="0" x2="24" y2="24" gradientUnits="userSpaceOnUse"><stop stopColor="#82dcff" /><stop offset="1" stopColor="#0a95f5" /></linearGradient></defs>
            <path d="M1 0h11v11H1zM13 0h11v11H13zM1 12h11v11H1zM13 12h11v11H13z" fill="url(#win)" />
          </Svg>
        </button>
        <button aria-label="Dosya Gezgini" className={tile}>
          <Svg w={24} h={24}>
            <defs><linearGradient id="folder" x1="0" y1="0" x2="1" y2="1"><stop stopColor="#ffe07a" /><stop offset="1" stopColor="#f9b915" /></linearGradient></defs>
            <path d="M0 2q0-2 2-2h6l3 3h-1L8 6H0z" fill="#e09b12" />
            <path d="M0 6h8l2-3h13q1 0 1 1v17.500H0z" fill="url(#folder)" />
            <path d="M4 21.500V16q0-1.500 1.500-1.500h13Q20 14.500 20 16v5.500z" fill="#1478d0" />
            <path d="M7 18.500h10v1.500H7z" fill="#0b57a0" />
          </Svg>
        </button>
        <button aria-label="Chrome" className={tile}>
          <Svg w={24} h={24}>
            <path d="M12 11.500 2.500 5.600A11.200 11.200 0 0 1 21.700 6z" fill="#db4437" />
            <path d="M12 11.500 2.500 5.600A11.200 11.200 0 0 0 10.500 22.600L16 13z" fill="#0f9d58" />
            <path d="M12 6h9.700A11.200 11.200 0 0 1 10.500 22.600L17 13z" fill="#ffcd40" />
            <circle cx="12" cy="11.500" r="5.500" fill="#f1f1f1" /><circle cx="12" cy="11.500" r="4.300" fill="#4285f4" />
          </Svg>
          <span className="mt-1 h-[3px] w-[6px] rounded-full bg-[#a0a0a0]" />
        </button>
        <button aria-label="Discord" className={tile}>
          <Svg w={24} h={24}>
            <circle cx="12" cy="12" r="12" fill="#5865f2" />
            <path d="M9.500 6.500c-1.500.2-2.700.7-3.500 1.200C4.700 10 4 12.500 4.200 15.700c1.300 1 2.500 1.500 3.700 1.800l1-1.600c2 .6 4.200.6 6.200 0l1 1.600c1.200-.3 2.400-.8 3.700-1.800.2-3.200-.5-5.700-1.800-8-.8-.5-2-1-3.500-1.200L14 7.700a12 12 0 0 0-4 0z" fill="#fff" />
            <circle cx="9.200" cy="12.500" r="1.700" fill="#5865f2" /><circle cx="14.800" cy="12.500" r="1.700" fill="#5865f2" />
          </Svg>
        </button>
        <button aria-label="Ekran Alıntısı Aracı" className={`${tile} bg-[#333231] outline outline-1 -outline-offset-1 outline-[#3d3c3b]`}>
          <Svg w={26} h={24}>
            <path d="M1 0h18v18H1z" fill="#f4f4f4" />
            <path d="M4.500 13V3.500H16" fill="none" stroke="#d83b01" strokeWidth="3" strokeDasharray="2.800 1" />
            <path d="M14.500 5v9.500H6M14.500 18V14.500H21" fill="none" stroke="#8d9297" strokeWidth="2.200" />
            <circle cx="14.500" cy="21" r="2" fill="none" stroke="#1da1e8" strokeWidth="1.800" /><circle cx="22.500" cy="13.500" r="2" fill="none" stroke="#1da1e8" strokeWidth="1.800" />
          </Svg>
          <span className="mt-1 h-[3px] w-4 rounded-full bg-[#4cc2ff]" />
        </button>
        <button aria-label="Photoshop" className={tile}>
          <span className="mt-px flex h-[22px] w-[22px] items-center justify-center rounded bg-[#001e36] text-[12px] font-bold text-[#31a8ff]">Ps</span>
          <span className="mt-[5px] h-[3px] w-[6px] rounded-full bg-[#a0a0a0]" />
        </button>
      </div>
      <div className="flex items-center justify-end pr-5">
        <button aria-label="Gizli simgeler"><Svg w={13} h={8}><path d="M1 7l5.500-5.500L12 7" fill="none" stroke="#fff" strokeWidth="1.300" /></Svg></button>
        <button aria-label="Ağ" className="ml-[13px]"><Svg w={18} h={18}><path d="M11 2.500H2q-1 0-1 1v8q0 1 1 1h11M4 15.500h8M6 13v2M10 13v2M12.500 1.500h4v4.500h-4zM14.500 6v10" fill="none" stroke="#fff" strokeWidth="1.200" /></Svg></button>
        <button aria-label="Ses" className="ml-[6px]"><Svg w={17} h={16}><path d="M1 5.500h3L8 2v12l-4-3.500H1z" fill="none" stroke="#fff" strokeWidth="1.200" /><path d="M10 5.500q2 2.500 0 5" fill="none" stroke="#fff" strokeWidth="1.200" /><path d="M12 3.500q3.500 4.500 0 9M14 2q5 6 0 12" fill="none" stroke="#777" strokeWidth="1.200" /></Svg></button>
        <div className="ml-4 text-right text-[11px] leading-4">
          <div>07:32</div>
          <div>20.10.2021</div>
        </div>
        <span className="ml-3 flex h-4 w-4 items-center justify-center rounded-full bg-[#4cc2ff] text-[10px] text-[#1a1a1a]">1</span>
      </div>
    </footer>
  );
}

export default function App() {
  return (
    <div className="flex h-screen flex-col overflow-hidden bg-[#424242]">
      <TitleBar />
      <OptionsBar />
      <div className="flex min-h-0 grow">
        <Toolbar />
        <DocumentArea />
        <Dock />
      </div>
      <Taskbar />
    </div>
  );
}
